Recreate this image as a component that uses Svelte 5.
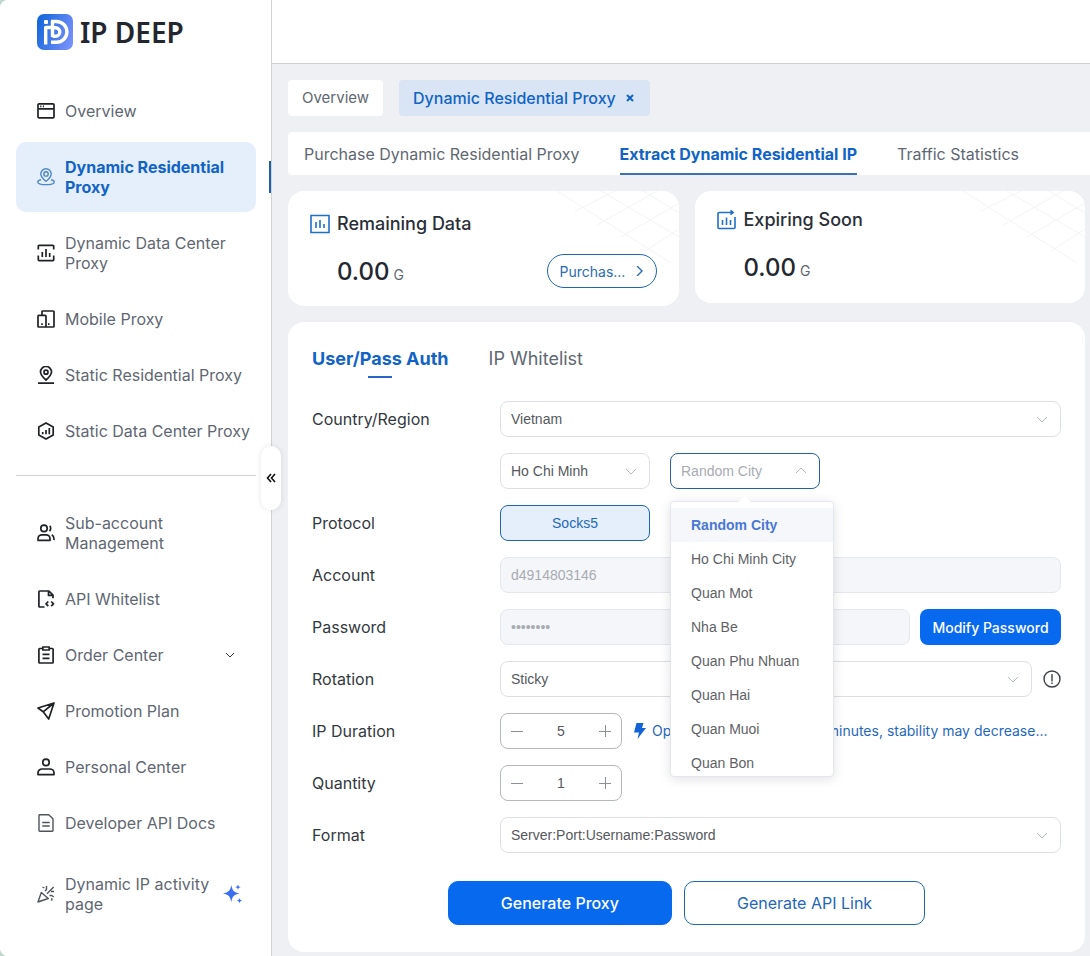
<script lang="ts">
	interface NavItem {
		label: string;
		icon: string;
		active?: boolean;
		expandable?: boolean;
		sparkle?: boolean;
		muted?: boolean;
	}

	const proxyItems: NavItem[] = [
		{ label: "Overview", icon: "window" },
		{ label: "Dynamic Residential Proxy", icon: "pinRing", active: true },
		{ label: "Dynamic Data Center Proxy", icon: "chartFrame" },
		{ label: "Mobile Proxy", icon: "devices" },
		{ label: "Static Residential Proxy", icon: "pinLine" },
		{ label: "Static Data Center Proxy", icon: "hexagon" },
	];

	const accountItems: NavItem[] = [
		{ label: "Sub-account Management", icon: "users" },
		{ label: "API Whitelist", icon: "fileCode" },
		{ label: "Order Center", icon: "clipboard", expandable: true },
		{ label: "Promotion Plan", icon: "plane" },
		{ label: "Personal Center", icon: "user" },
		{ label: "Developer API Docs", icon: "doc", muted: true },
		{
			label: "Dynamic IP activity page",
			icon: "party",
			sparkle: true,
			muted: true,
		},
	];

	// 18x18 stroke icons
	const icons: Record<string, string> = {
		window: "M2 1.8h14a1 1 0 0 1 1 1v12a1 1 0 0 1-1 1H2a1 1 0 0 1-1-1v-12a1 1 0 0 1 1-1zM1 6.9h16M3.2 4.4h1.2M5.8 4.4H7",
		pinRing:
			"M9 13.3C6 10.8 3.8 8.5 3.8 5.9a5.2 5.2 0 0 1 10.4 0C14.2 8.5 12 10.8 9 13.3zM9 3.7a2.2 2.2 0 1 0 0 4.4 2.2 2.2 0 0 0 0-4.4zM4 11.8c-2 .4-3.2 1.200-3.2 2.100 0 1.600 3.600 2.700 8.200 2.700s8.200-1.100 8.200-2.700c0-.9-1.200-1.700-3.200-2.100",
		chartFrame:
			"M1.3 5.500V2.200a.8.8 0 0 1 .8-.8h13.800a.8.8 0 0 1 .8.8v3.300M1.300 11.500v4.300c0 .4.4.8.8.8h13.800c.4 0 .8-.4.8-.8v-4.300M5.300 8v5M9 5v8M12.700 9v4",
		devices:
			"M5 5V1.800c0-.5.3-.8.8-.8h10.400c.5 0 .8.3.8.8v14.400c0 .5-.3.8-.8.8H1.800c-.5 0-.8-.3-.8-.8V6.200c0-.5.3-.8.8-.8h6.400c.5 0 .8.3.8.8V17M4.200 14.200h1.600M11 14.200h1.500",
		pinLine:
			"M9 14C6 11.300 3.500 9 3.500 6a5.500 5.500 0 0 1 11 0c0 3-2.500 5.300-5.500 8zM9 4.200a2 2 0 1 0 0 4 2 2 0 0 0 0-4zM1 17.200h16",
		hexagon:
			"M9 .9l7.200 4v8.200L9 17.100l-7.200-4V4.900zM5.700 10v2.200M9 8v4.200M12.300 6v6.200",
		users: "M7 1.200a3.200 3.200 0 1 0 0 6.400 3.200 3.200 0 0 0 0-6.400zM1 16.300v-1.600c0-2.200 1.700-3.900 3.900-3.900h4.200c2.200 0 3.900 1.700 3.900 3.900v1.600zM12.700 1.800c1.300 1.100 1.300 4-.2 5.400M14.800 10.800c1.500.9 2.400 2.700 2.200 5.300",
		fileCode:
			"M7.500 17H2.600c-.4 0-.7-.3-.7-.7V1.700c0-.4.3-.7.7-.7h9.300l4.100 4.200v3M11.500 1v4.400h4.300M11.300 11.500L9 13.800l2.300 2.300M14.200 11.500l2.300 2.300-2.300 2.300",
		clipboard:
			"M5.500 2.500H2.600c-.4 0-.7.3-.7.7v13.100c0 .4.3.7.7.7h12.800c.4 0 .7-.3.7-.7V3.200c0-.4-.3-.7-.7-.7h-2.900M5.800 1h6.400v3H5.800zM5.500 8.300h7M5.500 12.300h7",
		plane: "M17 1L1 6l5.200 3.800L11.700 17zM17 1L6.200 9.800",
		user: "M9 1.200a3.200 3.200 0 1 0 0 6.400 3.200 3.200 0 0 0 0-6.400zM1 16.600v-1.500c0-2.300 1.800-4.100 4.100-4.100h7.800c2.300 0 4.100 1.800 4.100 4.100v1.500z",
		doc: "M2 1.500c0-.4.3-.7.7-.7h9l4.300 4v11.700c0 .4-.3.7-.7.7H2.700c-.4 0-.7-.3-.7-.7zM5.300 8.500h7.400M5.300 12h7.400",
		party: "M4.300 7.500l7 6L1 17zM10 8.800L16.700 2M5.500 2l1.800 1M9.500 1v3.500L8 6M14 6.500h3M12.500 10.500h2.200l2 1.500M14.800 13.300v2.500",
	};

	const countries = ["Vietnam"];
	const provinces = ["Ho Chi Minh"];
	const cities = [
		"Random City",
		"Ho Chi Minh City",
		"Quan Mot",
		"Nha Be",
		"Quan Phu Nhuan",
		"Quan Hai",
		"Quan Muoi",
		"Quan Bon",
	];

	let city = $state("Random City");
	let cityOpen = $state(true);
	let duration = $state(5);
	let quantity = $state(1);

	function pickCity(name: string) {
		city = name;
		cityOpen = false;
	}
</script>

{#snippet navList(items: NavItem[])}
	<ul class="nav-list">
		{#each items as item}
			<li class:active={item.active} class:muted={item.muted} class:promo={item.sparkle}>
				<a href="#top" class="nav-item">
					<svg class="nav-icon" viewBox="0 0 18 18"><path d={icons[item.icon]} /></svg>
					<span class="nav-label">{item.label}</span>
					{#if item.expandable}
						<svg class="nav-chevron" viewBox="0 0 10 10"><path d="M1 3l4 4 4-4" /></svg>
					{/if}
					{#if item.sparkle}
						<svg class="sparkle" viewBox="0 0 20 20">
							<path d="M8.3 1c1 5.800 2.600 7.400 8.200 8.500-5.600 1.100-7.200 2.800-8.200 8.700C7.300 12.300 5.700 10.600 0 9.500 5.700 8.400 7.300 6.800 8.300 1z" />
							<path d="M15 .6c.4 1.800.9 2.300 2.700 2.600-1.800.4-2.300.9-2.700 2.700-.4-1.800-.9-2.300-2.700-2.700C14.100 2.900 14.600 2.400 15 .6z" />
							<path d="M16.500 14c.4 1.800.9 2.300 2.700 2.700-1.800.4-2.300.9-2.700 2.700-.4-1.800-.9-2.300-2.700-2.700 1.800-.4 2.300-.9 2.700-2.700z" />
						</svg>
					{/if}
				</a>
			</li>
		{/each}
	</ul>
{/snippet}

{#snippet chevron(up: boolean)}
	<svg class="chevron" class:up viewBox="0 0 12 12"><path d="M1 4l5 5 5-5" /></svg>
{/snippet}

{#snippet cardLines()}
	<svg class="card-lines" viewBox="0 0 140 72">
		<path d="M18 0L132 72M62 0l78 46M104 0l36 22M76 0L36 20M118 0L58 34M140 12L82 46M140 38l-34 22" />
	</svg>
{/snippet}

{#snippet stepper(id: string, value: number, change: (n: number) => void)}
	<div class="stepper">
		<button type="button" aria-label="Decrease" onclick={() => change(value - 1)}>
			<svg viewBox="0 0 12 12"><path d="M0 6.500h12" /></svg>
		</button>
		<input {id} type="text" {value} onchange={(e) => change(Number(e.currentTarget.value))} />
		<button type="button" aria-label="Increase" onclick={() => change(value + 1)}>
			<svg viewBox="0 0 12 12"><path d="M0 6.500h12M6.500 0v12" /></svg>
		</button>
	</div>
{/snippet}

<div class="app" id="top">
	<aside class="sidebar">
		<a href="#top" class="logo">
			<svg viewBox="0 0 36 36">
				<defs>
					<linearGradient id="logo-bg" x1="0" y1="0.300" x2="1" y2="0.700">
						<stop offset="0" stop-color="#1768dc" />
						<stop offset="1" stop-color="#7690fa" />
					</linearGradient>
				</defs>
				<rect width="36" height="36" rx="7" fill="url(#logo-bg)" />
				<rect x="7" y="6" width="4" height="4" rx="1" fill="#fff" />
				<g fill="none" stroke="#fff" stroke-width="3.400" stroke-linejoin="round">
					<path d="M8.700 30.500V13.500h6" />
					<path d="M15.500 7v16" />
					<path d="M14 7.500h5.500a10.300 10.300 0 0 1 0 20.800H14" />
					<path d="M15.500 13.700h3a4.300 4.300 0 0 1 0 8.600h-3" />
				</g>
			</svg>
			<span>IP DEEP</span>
		</a>
		<nav>
			{@render navList(proxyItems)}
			<hr />
			{@render navList(accountItems)}
		</nav>
		<button type="button" class="collapse" aria-label="Collapse sidebar">
			<svg viewBox="0 0 10 10"><path d="M5 1L1.500 5 5 9M9 1L5.500 5 9 9" /></svg>
		</button>
	</aside>

	<div class="content">
		<header class="topbar"></header>
		<main>
			<div class="page-tabs">
				<a href="#top" class="page-tab">Overview</a>
				<a href="#top" class="page-tab current">
					Dynamic Residential Proxy
					<svg viewBox="0 0 8 8"><path d="M1 1l6 6M7 1L1 7" /></svg>
				</a>
			</div>

			<nav class="sub-nav">
				<a href="#top">Purchase Dynamic Residential Proxy</a>
				<a href="#top" class="current">Extract Dynamic Residential IP</a>
				<a href="#top">Traffic Statistics</a>
			</nav>

			<div class="stats">
				<section class="stat remaining">
					{@render cardLines()}
					<h2>
						<svg viewBox="0 0 20 20">
							<path d="M1 1.500h18v17H1zM6 8v6M10 6v8M14 10v4" />
						</svg>
						Remaining Data
					</h2>
					<div class="stat-row">
						<p><strong>0.00</strong> G</p>
						<button type="button" class="purchase">
							Purchas...
							<svg viewBox="0 0 10 10"><path d="M3 0l5 5-5 5" /></svg>
						</button>
					</div>
				</section>
				<section class="stat">
					{@render cardLines()}
					<h2>
						<svg viewBox="0 0 20 20">
							<path d="M12 2.500H2c-.6 0-1 .4-1 1v14c0 .6.4 1 1 1h15c.6 0 1-.4 1-1V7M11 2.500h5M13.500.3l2.600 2.200-2.600 2.200M5.500 10v5M9.500 7.500V15M13.500 10v5" />
						</svg>
						Expiring Soon
					</h2>
					<div class="stat-row">
						<p><strong>0.00</strong> G</p>
					</div>
				</section>
			</div>

			<form class="panel" onsubmit={(e) => e.preventDefault()}>
				<div class="auth-tabs">
					<button type="button" class="current">User/Pass Auth</button>
					<button type="button">IP Whitelist</button>
				</div>

				<div class="row">
					<label for="country">Country/Region</label>
					<div class="field grow">
						<select id="country">
							{#each countries as c}<option>{c}</option>{/each}
						</select>
						{@render chevron(false)}
					</div>
				</div>

				<div class="row">
					<span class="spacer"></span>
					<div class="field short">
						<select aria-label="Province">
							{#each provinces as p}<option>{p}</option>{/each}
						</select>
						{@render chevron(false)}
					</div>
					<div class="field short city" class:open={cityOpen}>
						<select aria-label="City" bind:value={city} onmousedown={() => (cityOpen = !cityOpen)}>
							{#each cities as c}<option>{c}</option>{/each}
						</select>
						{@render chevron(cityOpen)}
						{#if cityOpen}
							<div class="menu">
								<div class="menu-scroll">
									{#each cities as c}
										<button type="button" class:selected={c === city} onclick={() => pickCity(c)}>{c}</button>
									{/each}
								</div>
							</div>
						{/if}
					</div>
				</div>

				<div class="row">
					<span class="label">Protocol</span>
					<button type="button" class="protocol">Socks5</button>
				</div>

				<div class="row">
					<label for="account">Account</label>
					<input id="account" class="grow" type="text" value="d4914803146" disabled />
				</div>

				<div class="row">
					<label for="password">Password</label>
					<input id="password" class="grow" type="password" value="password" autocomplete="off" disabled />
					<button type="button" class="modify">Modify Password</button>
				</div>

				<div class="row">
					<label for="rotation">Rotation</label>
					<div class="field grow">
						<select id="rotation"><option>Sticky</option></select>
						{@render chevron(false)}
					</div>
					<svg class="info" viewBox="0 0 18 18">
						<circle cx="9" cy="9" r="8" />
						<path d="M9 4v7.500M9 12.500V14" />
					</svg>
				</div>

				<div class="row">
					<label for="duration">IP Duration</label>
					{@render stepper("duration", duration, (n) => (duration = Math.max(1, n)))}
					<p class="hint">
						<svg viewBox="0 0 12 16"><path d="M2.500 0h7L8 5h4L3.500 16 5 9.500H0z" /></svg>
						<span>Optimal stability within 30 minutes, stability may decrease...</span>
					</p>
				</div>

				<div class="row">
					<label for="quantity">Quantity</label>
					{@render stepper("quantity", quantity, (n) => (quantity = Math.max(1, n)))}
				</div>

				<div class="row">
					<label for="format">Format</label>
					<div class="field grow">
						<select id="format"><option>Server:Port:Username:Password</option></select>
						{@render chevron(false)}
					</div>
				</div>

				<div class="actions">
					<button type="submit" class="primary">Generate Proxy</button>
					<button type="button">Generate API Link</button>
				</div>
			</form>
		</main>
	</div>
</div>

<style>
	:global(body) {
		background: #bfd8cc;
	}

	.app,
	.app * {
		box-sizing: border-box;
	}

	.app {
		display: flex;
		min-height: 100vh;
		font-family: Inter, "Liberation Sans", sans-serif;
		font-size: 16px;
		line-height: 20px;
		color: #5f6772;
		background: #eff0f4;
		border-radius: 8px 0 0 8px;
	}

	a {
		color: inherit;
		text-decoration: none;
	}

	button,
	input,
	select {
		margin: 0;
		font-family: inherit;
	}

	button {
		padding: 0;
		border: 0;
		background: none;
		color: inherit;
		cursor: pointer;
	}

	svg {
		flex: none;
		fill: none;
		stroke: currentColor;
	}

	h2,
	p,
	ul {
		margin: 0;
		padding: 0;
		list-style: none;
	}

	.sidebar {
		position: relative;
		flex: none;
		width: 272px;
		padding: 14px 15px 26px 16px;
		background: #fff;
		border-right: 1px solid #d0d2d6;
		border-radius: 8px 0 0 8px;
	}

	.logo {
		display: flex;
		align-items: center;
		gap: 7px;
		margin: 0 0 36px 21px;
		font-family: "Noto Sans", sans-serif;
		font-size: 28px;
		font-weight: 600;
		line-height: 36px;
		color: #23262f;
	}

	.logo svg {
		width: 36px;
		height: 36px;
		stroke: none;
	}

	.nav-list {
		display: flex;
		flex-direction: column;
		gap: 6px;
	}

	.nav-item {
		position: relative;
		display: flex;
		align-items: center;
		gap: 10px;
		padding: 15px 0 15px 21px;
		border-radius: 10px;
	}

	.nav-icon {
		width: 18px;
		height: 18px;
		color: #1f2226;
		stroke-width: 1.7;
		stroke-linejoin: round;
	}

	.muted .nav-icon {
		color: #4f545c;
		stroke-width: 1.4;
	}

	.promo {
		margin-top: 5px;
	}

	.active .nav-item {
		padding-right: 20px;
		background: #e5effb;
		color: #1163c6;
		font-weight: 700;
	}

	.active .nav-icon {
		color: #4c86cc;
		stroke-width: 1.4;
	}

	.active .nav-item::after {
		content: "";
		position: absolute;
		top: 19px;
		right: -15px;
		width: 2px;
		height: 32px;
		background: #1d5fa8;
	}

	.nav-label {
		flex: 1;
	}

	.nav-chevron {
		width: 10px;
		height: 10px;
		margin-right: 21px;
		color: #303133;
	}

	.sparkle {
		width: 20px;
		height: 20px;
		margin-right: 13px;
		fill: #3a6df0;
		stroke: none;
	}

	hr {
		height: 1px;
		margin: 19px 0 22px;
		border: 0;
		background: #cfd1d4;
	}

	.collapse {
		position: absolute;
		top: 446px;
		right: -10px;
		width: 20px;
		height: 64px;
		border-radius: 10px;
		background: #fff;
		color: #111;
		box-shadow: 0 0 6px rgba(0, 0, 0, 0.1);
	}

	.collapse svg {
		width: 10px;
		height: 10px;
		stroke-width: 1.6;
	}

	.content {
		flex: 1;
		min-width: 0;
	}

	.topbar {
		height: 64px;
		background: #fff;
		border-bottom: 1px solid #cfd1d5;
	}

	main {
		display: flex;
		flex-direction: column;
		gap: 16px;
		padding: 16px 0 4px 16px;
	}

	.page-tabs {
		display: flex;
		gap: 16px;
		font-size: 15px;
	}

	.page-tab {
		display: flex;
		align-items: center;
		gap: 10px;
		height: 36px;
		padding: 0 14px;
		border-radius: 4px;
		background: #fff;
	}

	.page-tab.current {
		padding-right: 16px;
		background: #d9e5f4;
		color: #1163c6;
		font-size: 16px;
		font-weight: 500;
	}

	.page-tab svg {
		width: 8px;
		height: 8px;
		stroke-width: 2;
	}

	.sub-nav {
		display: flex;
		gap: 40px;
		height: 43px;
		padding: 0 16px;
		border-radius: 4px 0 0 4px;
		background: #fff;
		line-height: 44px;
		white-space: nowrap;
	}

	.sub-nav .current {
		border-bottom: 2px solid #3a73b5;
		color: #1163c6;
		font-weight: 700;
	}

	.stats {
		display: grid;
		grid-template-columns: 1fr 1fr;
		align-items: start;
		gap: 16px;
		margin-right: 5px;
	}

	.stat {
		position: relative;
		padding: 16px 22px 19px;
		border-radius: 16px;
		background: #fff;
		overflow: hidden;
	}

	.stat.remaining {
		padding-top: 20px;
		padding-bottom: 18px;
	}

	.card-lines {
		position: absolute;
		top: 0;
		right: 0;
		width: 140px;
		height: 72px;
		color: #f3f4f6;
	}

	.stat h2 {
		display: flex;
		align-items: center;
		gap: 7px;
		font-size: 18px;
		font-weight: 500;
		line-height: 26px;
		color: #2a2f38;
	}

	.stat h2 svg {
		width: 20px;
		height: 20px;
		color: #1f6fc4;
		stroke-width: 1.6;
	}

	.stat-row {
		display: flex;
		align-items: center;
		justify-content: space-between;
		height: 34px;
		margin-top: 17px;
		padding-left: 27px;
	}

	.stat p {
		padding-top: 4px;
		font-size: 14px;
		line-height: 30px;
	}

	.stat strong {
		font-size: 24px;
		font-weight: 500;
		color: #23272f;
	}

	.purchase {
		display: flex;
		align-items: center;
		justify-content: space-between;
		width: 110px;
		height: 34px;
		padding: 0 12px;
		border: 1px solid #1f66ae;
		border-radius: 17px;
		font-size: 14px;
		color: #2a6cb3;
	}

	.purchase svg {
		width: 10px;
		height: 10px;
		stroke-width: 1.4;
	}

	.panel {
		display: flex;
		flex-direction: column;
		gap: 16px;
		margin-right: 5px;
		padding: 24px 24px 27px;
		border-radius: 16px;
		background: #fff;
	}

	.auth-tabs {
		display: flex;
		gap: 40px;
		margin-bottom: 7px;
	}

	.auth-tabs button {
		height: 32px;
		padding-bottom: 6px;
		font-size: 18px;
		line-height: 26px;
	}

	.auth-tabs .current {
		color: #1163c6;
		font-weight: 700;
		background: linear-gradient(#2a66c8, #2a66c8) bottom / 24px 2px no-repeat;
	}

	.row {
		display: flex;
		align-items: center;
		gap: 10px;
		height: 36px;
	}

	.row > label,
	.row > .label,
	.spacer {
		flex: none;
		width: 178px;
		color: #333940;
	}

	.grow {
		flex: 1;
		min-width: 0;
	}

	.field {
		position: relative;
	}

	.field.short {
		width: 150px;
	}

	.city {
		margin-left: 10px;
	}

	select,
	.row input {
		width: 100%;
		height: 36px;
		padding: 0 10px;
		border: 1px solid #dcdfe6;
		border-radius: 8px;
		background: #fff;
		font-family: "Liberation Sans", Arial, sans-serif;
		font-size: 14px;
		color: #55585d;
		appearance: none;
	}

	.row input:disabled {
		border-color: #e4e7ed;
		background: #f5f6fa;
		color: #a8abb2;
	}

	.open select {
		border-color: #22629f;
		color: #a8abb2;
	}

	.chevron {
		position: absolute;
		top: 12px;
		right: 13px;
		width: 12px;
		height: 12px;
		color: #b4b8bf;
		pointer-events: none;
	}

	.chevron.up {
		transform: rotate(180deg);
	}

	.menu {
		position: absolute;
		z-index: 2;
		top: 48px;
		left: 0;
		width: 164px;
		border: 1px solid #e4e7ed;
		border-radius: 4px;
		background: #fff;
		box-shadow: 0 2px 12px rgba(0, 0, 0, 0.12);
	}

	.menu::before {
		content: "";
		position: absolute;
		top: -6px;
		left: 68px;
		border: 6px solid transparent;
		border-top: 0;
		border-bottom-color: #fff;
	}

	.menu-scroll {
		height: 274px;
		padding-top: 6px;
		overflow: hidden;
	}

	.menu button {
		display: block;
		width: 100%;
		height: 34px;
		padding: 0 20px;
		font-family: "Liberation Sans", Arial, sans-serif;
		font-size: 14px;
		text-align: left;
		color: #606266;
	}

	.menu .selected {
		background: #f5f7fa;
		color: #4a78d6;
		font-weight: 700;
	}

	.protocol {
		width: 150px;
		height: 36px;
		border: 1px solid #1f66ae;
		border-radius: 8px;
		background: #e5effb;
		font-family: "Liberation Sans", Arial, sans-serif;
		font-size: 14px;
		color: #2368b8;
	}

	.modify {
		width: 141px;
		height: 36px;
		border-radius: 8px;
		background: #0769ee;
		font-size: 14px;
		font-weight: 500;
		color: #fff;
	}

	.info {
		width: 18px;
		height: 18px;
		margin-left: 1px;
		color: #3c4046;
		stroke-width: 1.4;
	}

	.stepper {
		display: flex;
		flex: none;
		width: 122px;
		height: 36px;
		border: 1px solid #b4b7bd;
		border-radius: 8px;
	}

	.stepper button {
		display: flex;
		flex: none;
		align-items: center;
		justify-content: center;
		width: 32px;
		color: #8d9197;
	}

	.stepper svg {
		width: 12px;
		height: 12px;
	}

	.stepper input {
		flex: 1;
		min-width: 0;
		height: 34px;
		padding: 0;
		border: 0;
		background: none;
		text-align: center;
	}

	.hint {
		display: flex;
		flex: 1;
		align-items: center;
		gap: 6px;
		min-width: 0;
		padding-left: 2px;
		font-size: 14px;
		color: #1f68bd;
		white-space: nowrap;
	}

	.hint svg {
		width: 12px;
		height: 16px;
		fill: #1163d6;
		stroke: none;
	}

	.actions {
		display: flex;
		justify-content: center;
		gap: 12px;
		margin-top: 12px;
	}

	.actions button {
		height: 44px;
		padding: 0 52px;
		border: 1px solid #1f66ae;
		border-radius: 10px;
		font-size: 16px;
		color: #2368b8;
	}

	.actions .primary {
		border-color: #0769ee;
		background: #0769ee;
		font-weight: 500;
		color: #fff;
	}
</style>
